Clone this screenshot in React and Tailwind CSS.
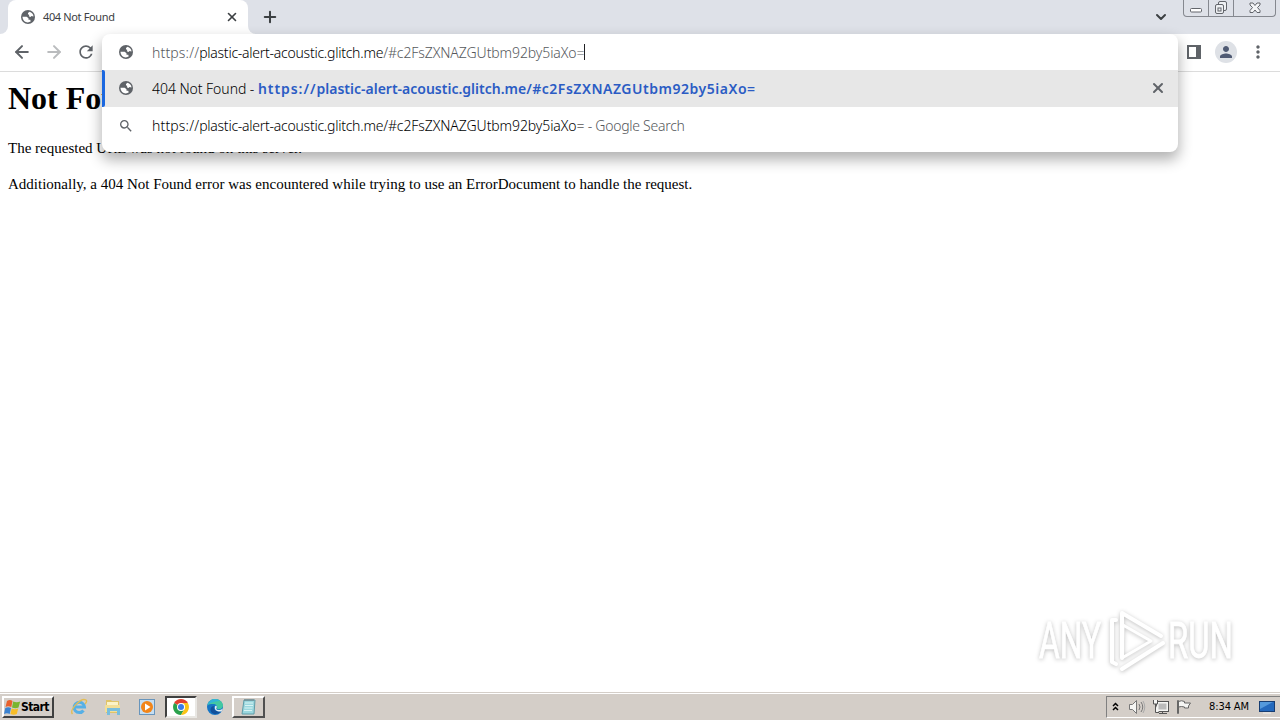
import { ArrowLeft, ArrowRight, ChevronDown, Plus, X } from "lucide-react";
import { MdSearch, MdRefresh, MdPerson, MdMoreVert } from "react-icons/md";

const HOST = "plastic-alert-acoustic.glitch.me";
const HASH = "/#c2FsZXNAZGUtbm92by5iaXo=";

function Globe({ className }) {
  return (
    <svg width="16" height="16" viewBox="0 0 16 16" className={className}>
      <circle cx="8" cy="8" r="7" fill="#5f6368" />
      <path
        fill="#fff"
        d="M9.500 2.700 8 4v1.300L9.300 6l-.5 1.300 1.700.7 1-.9 2 .4c-.1-2.400-1.700-4.200-4-4.800zM2.500 7.700h4.200l1.800 1.600v1.400h1.800l.4 1.900c-3.700 2.200-8.100-.3-8.200-4.900z"
      />
    </svg>
  );
}

function WindowButtons() {
  return (
    <div className="mr-[4px] flex h-[17px] w-[93px] rounded-b-[4px] border border-t-0 border-[#85888f]">
      <div className="flex w-[25px] items-center justify-center border-r border-[#85888f]">
        <svg width="12" height="14" fill="none" stroke="#62656b">
          <rect x="0.5" y="7.5" width="11" height="3.5" rx="1" fill="#fff" />
        </svg>
      </div>
      <div className="flex w-[25px] items-center justify-center border-r border-[#85888f]">
        <svg width="14" height="14" fill="#eef0f3" stroke="#62656b">
          <rect x="4.5" y="0.5" width="8" height="9" rx="1.5" />
          <rect x="1.5" y="3.5" width="8" height="9" rx="1.5" />
          <rect x="4" y="7" width="3" height="3" />
        </svg>
      </div>
      <div className="flex flex-1 items-center justify-center">
        <svg width="12" height="12" fill="#f4f5f7" stroke="#62656b">
          <path d="M1 1h3l2 2.5L8 1h3v2L8.5 5.5 11 8.5v2H8L6 8l-2 2.5H1v-2l2.5-3L1 3z" />
        </svg>
      </div>
    </div>
  );
}

function TabStrip() {
  return (
    <div className="flex h-[34px] items-start justify-between bg-[#dee1e8]">
      <div className="flex">
        <div className="flex h-[34px] w-2 bg-white">
          <div className="w-2 rounded-br-lg bg-[#dee1e8]" />
        </div>
        <div className="flex h-[34px] w-60 items-center rounded-t-lg bg-white pl-[12px] pr-[9px]">
          <Globe />
          <span className="ml-[7px] flex-1 font-['Noto_Sans','Liberation_Sans',sans-serif] text-[11px] tracking-[-0.36px] text-[#3c4043]">
            404 Not Found
          </span>
          <X size={14} strokeWidth={2.8} className="text-[#3c4043]" />
        </div>
        <div className="flex h-[34px] w-2 bg-white">
          <div className="w-2 rounded-bl-lg bg-[#dee1e8]" />
        </div>
        <Plus size={18} strokeWidth={2.7} className="ml-[5px] mt-2 text-[#3c4043]" />
      </div>
      <div className="flex">
        <ChevronDown size={16} strokeWidth={3} className="mr-[14px] mt-[9px] text-[#3c4043]" />
        <WindowButtons />
      </div>
    </div>
  );
}

function Toolbar() {
  return (
    <div className="flex h-[38px] items-center border-b border-[#dcdcdc] bg-white pb-px pl-3">
      <ArrowLeft size={20} strokeWidth={2.4} className="text-[#5f6368]" />
      <ArrowRight size={20} strokeWidth={2.4} className="ml-3 text-[#babcbe]" />
      <MdRefresh size={20} className="ml-3 text-[#5f6368]" />
      <div className="ml-auto flex items-center pr-[12px]">
        <svg width="14" height="14" className="mr-[14px]">
          <rect x="1" y="1" width="12" height="12" fill="none" stroke="#5f6368" strokeWidth="2" />
          <path d="M9 1h4v12H9z" fill="#5f6368" />
        </svg>
        <div className="mr-[11px] flex size-[22px] items-center justify-center rounded-full bg-[#dee1e6]">
          <MdPerson size={18} className="text-[#4f5a73]" />
        </div>
        <MdMoreVert size={20} className="text-[#5f6368]" />
      </div>
    </div>
  );
}

function Omnibox() {
  return (
    <div className="absolute left-[102px] top-[34px] h-[118px] w-[1076px] rounded-lg bg-white font-['Noto_Sans','Liberation_Sans',sans-serif] text-[14px] font-light text-black shadow-[0_7px_14px_1px_rgba(0,0,0,0.3)]">
      <div className="flex h-9 items-center whitespace-pre pl-4">
        <Globe className="mr-[18px]" />
        <span className="tracking-[0.15px] text-[#55585c]">https://</span>
        <span className="tracking-[-0.25px]">{HOST}</span>
        <span className="tracking-[-0.1px] text-[#55585c]">{HASH}</span>
        <span className="h-4 w-px bg-[#202124]" />
      </div>
      <div className="flex h-[37px] items-center whitespace-pre bg-[#e7e7e7] pr-[12px]">
        <div className="h-full w-[3px] rounded-r-[2px] bg-[#1a67e0]" />
        <Globe className="mb-px ml-[13px] mr-[18px]" />
        <span className="tracking-[-0.05px]">404 Not Found - </span>
        <span className="font-semibold tracking-[0.95px] text-[#2b5cc4]">https://</span>
        <span className="font-semibold tracking-[0px] text-[#2b5cc4]">{HOST}</span>
        <span className="font-semibold tracking-[0.52px] text-[#2b5cc4]">{HASH}</span>
        <X size={16} strokeWidth={3} className="mb-[2px] ml-auto text-[#5f6368]" />
      </div>
      <div className="flex h-[37px] items-center whitespace-pre pl-4">
        <MdSearch size={16} className="mr-[18px] text-[#5f6368]" />
        <span className="tracking-[0.15px]">https://</span>
        <span className="tracking-[-0.25px]">{HOST}</span>
        <span className="tracking-[-0.1px]">{HASH}</span>
        <span className="tracking-[-0.27px] text-[#55585c]"> - Google Search</span>
      </div>
    </div>
  );
}

function Watermark() {
  return (
    <svg
      width="240"
      height="76"
      viewBox="0 0 240 76"
      className="absolute left-[1030px] top-[602px] overflow-visible font-['Roboto',sans-serif] drop-shadow-[0_1px_2px_rgba(0,0,0,0.26)]"
    >
      <g fill="#fff" stroke="#fff" strokeWidth="0.8" fontSize="50">
        <text x="9" y="56" textLength="62" lengthAdjust="spacingAndGlyphs">ANY</text>
        <text x="138" y="56" textLength="65" lengthAdjust="spacingAndGlyphs">RUN</text>
      </g>
      <g fill="none" stroke="#fff" strokeWidth="4" strokeLinejoin="round" strokeLinecap="round">
        <path d="M92 56V11l39 23" />
        <path d="M86 18h-4v42l4 2M92 67l41-26" />
        <path d="M93 23l28 16-29 17z" strokeWidth="3" />
      </g>
    </svg>
  );
}

function StartButton() {
  return (
    <div className="flex h-[22px] w-[52px] items-center border-2 border-b-[#404040] border-l-white border-r-[#404040] border-t-white bg-[#d4cec8]">
      <svg width="17" height="17" viewBox="0 0 17 17" className="shrink-0">
        <path d="M3 2q3-2 5.500 0L7.300 8Q4 6.500 1.500 8z" fill="#e8602c" />
        <path d="M9.200 2.500q3.500 1.500 7 0L14.500 8.500q-3 1.500-6.500 0z" fill="#79b530" />
        <path d="M1.300 9q3-1.500 5.700 0l-1.300 6Q3 13.500 0 15z" fill="#3b82d0" />
        <path d="M7.700 9.500q3.300 1.500 6.500 0l-1.400 5.500q-3 1.500-6.400 0z" fill="#f7bd27" />
      </svg>
      <span className="font-['DejaVu_Sans_Condensed','DejaVu_Sans',sans-serif] text-[12px] font-bold tracking-[-0.55px] text-black">
        Start
      </span>
    </div>
  );
}

function QuickLaunch() {
  return (
    <div className="flex h-[22px] items-center">
      <svg width="18" height="18" viewBox="0 0 18 18" className="ml-[16px]">
        <path d="M13.500 12.500a5.200 5.200 0 1 1 1-3.500H5" fill="none" stroke="#56b0e6" strokeWidth="3" />
        <path d="M2.500 16C-1 12 11-1 16 2c1 1 0 3-1 4" fill="none" stroke="#e3bd55" strokeWidth="1.400" />
      </svg>
      <svg width="18" height="18" viewBox="0 0 18 18" className="ml-[16px]">
        <path d="M2 2h5l1 1h7v12H2z" fill="#e0c468" />
        <path d="M3 4h11v5H3z" fill="#fbf3c8" />
        <path d="M1 7h15v7H1z" fill="#f2df98" />
        <path d="M3 17v-7h13v7h-3v-4H6v4z" fill="#79bedd" />
      </svg>
      <svg width="18" height="18" viewBox="0 0 18 18" className="ml-[16px]">
        <rect x="1.500" y="1.500" width="15" height="15" fill="#c5def2" stroke="#6895bc" />
        <circle cx="9" cy="9" r="6" fill="#f28519" />
        <path d="M7 5.500v7L12.500 9z" fill="#fff" />
      </svg>
      <div className="ml-[9px] flex h-[22px] w-[32px] items-center justify-center border-2 border-b-[#e9e7e3] border-l-[#404040] border-r-[#e9e7e3] border-t-[#404040] bg-white">
        <ChromeIcon />
      </div>
      <EdgeIcon />
      <div className="ml-[8px] flex h-[22px] w-[33px] items-center justify-center border-2 border-b-[#505050] border-l-white border-r-[#505050] border-t-white">
        <NotepadIcon />
      </div>
    </div>
  );
}

function ChromeIcon() {
  return (
    <svg width="16" height="16" viewBox="0 0 16 16">
      <path d="M8 8 1.100 4A8 8 0 0 1 14.900 4z" fill="#e2402f" />
      <path d="M8 8 1.100 4A8 8 0 0 0 8 16l3.500-6z" fill="#2aa14c" />
      <path d="M8 4h6.900A8 8 0 0 1 8 16l3.500-6z" fill="#fbc316" />
      <circle cx="8" cy="8" r="4" fill="#fff" />
      <circle cx="8" cy="8" r="3" fill="#3a7be8" />
    </svg>
  );
}

function EdgeIcon() {
  return (
    <svg width="18" height="18" viewBox="0 0 18 18" className="ml-[9px]">
      <circle cx="9" cy="9" r="8" fill="#1675c5" />
      <path d="M1.500 7C3 2 7 1 9 1c5 0 8 3.500 8 6.500S14 12 11 11c1-3-1-5-4-5-2.500 0-4.500.5-5.500 1z" fill="#42c8a2" />
      <path d="M1.500 7C3 2 7 1 9 1c2 0 4 1 5 2-3 0-9 1-12.500 4z" fill="#31b4d8" />
      <path d="M8 8c-1 3 1 6 7 5.500C11 18 4 16 4.500 11 5 9 6.500 8 8 8z" fill="#11509b" />
      <path d="M9 8.500c0-1 2-1 1.800.5-.1 1-.8 1.500-.3 2.200 1.500 1.500 5 .8 6.500-.7l-1.500 3C11 14 8 12 9 8.500z" fill="#e4eef2" />
    </svg>
  );
}

function NotepadIcon() {
  return (
    <svg width="16" height="18" viewBox="0 0 16 18">
      <path d="M3 2h11l-1 14H1z" fill="#9bd7de" stroke="#5f9ca8" />
      <path d="M4 5h8M4 7.500h8M3.500 10h8M3 12.500h8" stroke="#d9f4f4" />
      <path d="M4 1v2M6 1v2M8 1v2M10 1v2M12 1v2" stroke="#687a80" />
    </svg>
  );
}

function Tray() {
  return (
    <div className="flex h-[22px] w-[174px] items-center border border-b-white border-l-[#808080] border-r-0 border-t-[#808080] pl-[5px]">
      <svg width="7" height="10" fill="none" stroke="#000" strokeWidth="1.500" className="mb-px">
        <path d="M1 4l2.500-2.500L6 4M1 8l2.500-2.500L6 8" />
      </svg>
      <svg width="18" height="16" fill="none" stroke="#777" className="ml-[9px]">
        <path d="M1.500 5.500h3l4-4v13l-4-4h-3z" fill="#f5f5f3" />
        <path d="M11 5q2 3 0 6M13 3q3.500 5 0 10" />
        <path d="M15 2q3.500 6 0 12" stroke="#aaa" />
      </svg>
      <svg width="17" height="16" fill="none" stroke="#555" className="ml-[6px]">
        <rect x="5.500" y="3.500" width="10" height="8" fill="#bbb" stroke="#f5f5f3" strokeWidth="2" />
        <rect x="4.500" y="2.500" width="12" height="10" />
        <path d="M7 14.500h8M10.500 12v2" />
        <path d="M1.500 1v4h4V1M3.500 5v8.500H7" fill="#f5f5f3" />
      </svg>
      <svg width="16" height="16" fill="#f5f5f3" stroke="#666" className="ml-[7px]">
        <path d="M1.500 1.500h1v13h-1zM2.500 2.500q3-1.500 6 0v1.500h6l-2 3 0 2h-4V8q-3-1-6 0z" />
      </svg>
      <span className="ml-[17px] w-[50px] whitespace-nowrap font-['DejaVu_Sans_Condensed','DejaVu_Sans',sans-serif] text-[11px] tracking-[-0.1px] text-black">
        8:34 AM
      </span>
      <svg width="16" height="14">
        <rect x="0.500" y="1.500" width="15" height="10" fill="#2469bd" stroke="#173d72" />
        <path d="M1 2h13L1 9z" fill="#5499dc" />
        <path d="M4 13h8" stroke="#eee" />
      </svg>
    </div>
  );
}

function Taskbar() {
  return (
    <footer className="flex h-7 flex-col bg-[#d4cec8] pt-px">
      <div className="flex flex-1 items-start border-t border-white pl-[2px] pt-[2px]">
        <StartButton />
        <QuickLaunch />
        <div className="flex-1" />
        <Tray />
      </div>
    </footer>
  );
}

export default function App() {
  return (
    <div className="relative flex h-[720px] w-[1280px] flex-col overflow-hidden bg-white">
      <TabStrip />
      <Toolbar />
      <Omnibox />
      <main className="flex-1 px-2 pt-2 font-['Liberation_Serif',serif] text-[15px] text-black">
        <h1 className="text-[32px] font-bold leading-[37px]">Not Found</h1>
        <p className="mt-[22px] leading-[18px]">The requested URL was not found on this server.</p>
        <p className="mt-[18px] leading-[18px]">
          Additionally, a 404 Not Found error was encountered while trying to use an ErrorDocument to handle the request.
        </p>
      </main>
      <Watermark />
      <Taskbar />
    </div>
  );
}
